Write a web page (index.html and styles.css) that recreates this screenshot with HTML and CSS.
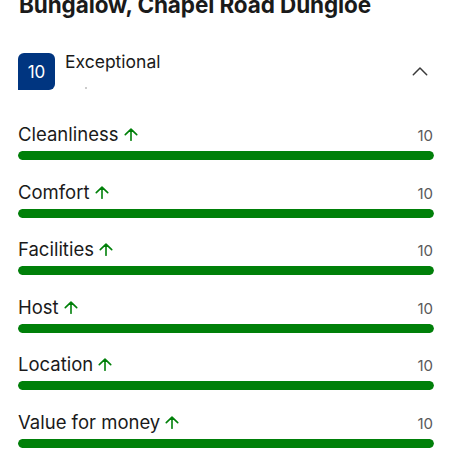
FILE: index.html
```html
<!DOCTYPE html>
<html>
<head>
<meta charset="utf-8">
<link rel="stylesheet" href="styles.css">
</head>
<body>
<div class="page">
  <h1 class="title">Bungalow, Chapel Road Dungloe</h1>
  <div class="summary">
    <div class="badge">10</div>
    <div class="summary-text">
      <div class="verdict">Exceptional</div>
      <div class="dot"></div>
    </div>
    <svg class="chevron" width="16" height="10" viewBox="0 0 16 10"><path d="M1.3 8.8 L8 2 L14.7 8.8" fill="none" stroke="#3a3a3a" stroke-width="1.5" stroke-linecap="round" stroke-linejoin="round"/></svg>
  </div>
  <div class="rows">
    <div class="row">
      <div class="row-head"><span class="label">Cleanliness<svg class="arrow" width="14" height="13" viewBox="0 0 14 13"><path d="M7 12.3V1.2 M1.3 6.7 L7 1.2 L12.7 6.7" fill="none" stroke="#008009" stroke-width="1.6" stroke-linecap="round" stroke-linejoin="round"/></svg></span><span class="score">10</span></div>
      <div class="bar"><div class="fill" style="width:100%"></div></div>
    </div>
    <div class="row">
      <div class="row-head"><span class="label">Comfort<svg class="arrow" width="14" height="13" viewBox="0 0 14 13"><path d="M7 12.3V1.2 M1.3 6.7 L7 1.2 L12.7 6.7" fill="none" stroke="#008009" stroke-width="1.6" stroke-linecap="round" stroke-linejoin="round"/></svg></span><span class="score">10</span></div>
      <div class="bar"><div class="fill" style="width:100%"></div></div>
    </div>
    <div class="row">
      <div class="row-head"><span class="label">Facilities<svg class="arrow" width="14" height="13" viewBox="0 0 14 13"><path d="M7 12.3V1.2 M1.3 6.7 L7 1.2 L12.7 6.7" fill="none" stroke="#008009" stroke-width="1.6" stroke-linecap="round" stroke-linejoin="round"/></svg></span><span class="score">10</span></div>
      <div class="bar"><div class="fill" style="width:100%"></div></div>
    </div>
    <div class="row">
      <div class="row-head"><span class="label">Host<svg class="arrow" width="14" height="13" viewBox="0 0 14 13"><path d="M7 12.3V1.2 M1.3 6.7 L7 1.2 L12.7 6.7" fill="none" stroke="#008009" stroke-width="1.6" stroke-linecap="round" stroke-linejoin="round"/></svg></span><span class="score">10</span></div>
      <div class="bar"><div class="fill" style="width:100%"></div></div>
    </div>
    <div class="row">
      <div class="row-head"><span class="label">Location<svg class="arrow" width="14" height="13" viewBox="0 0 14 13"><path d="M7 12.3V1.2 M1.3 6.7 L7 1.2 L12.7 6.7" fill="none" stroke="#008009" stroke-width="1.6" stroke-linecap="round" stroke-linejoin="round"/></svg></span><span class="score">10</span></div>
      <div class="bar"><div class="fill" style="width:100%"></div></div>
    </div>
    <div class="row">
      <div class="row-head"><span class="label">Value for money<svg class="arrow" width="14" height="13" viewBox="0 0 14 13"><path d="M7 12.3V1.2 M1.3 6.7 L7 1.2 L12.7 6.7" fill="none" stroke="#008009" stroke-width="1.6" stroke-linecap="round" stroke-linejoin="round"/></svg></span><span class="score">10</span></div>
      <div class="bar"><div class="fill" style="width:100%"></div></div>
    </div>
  </div>
</div>
</body>
</html>
```
FILE: styles.css
```css
* { box-sizing: border-box; }
html, body { margin: 0; padding: 0; background: #fff; }
body {
  font-family: Inter, "Liberation Sans", sans-serif;
  color: #1a1a1a;
}
.page {
  width: 450px;
  padding: 0 16px 0 18px;
}
.title {
  margin: -9px 0 0 1px;
  font-size: 22.5px;
  line-height: 28px;
  font-weight: 700;
  color: #1a1a1a;
  letter-spacing: -0.1px;
  white-space: nowrap;
}
.summary {
  display: flex;
  align-items: flex-start;
  margin-top: 34px;
  height: 37px;
}
.badge {
  flex: none;
  width: 37px;
  height: 37px;
  background: #003580;
  color: #fff;
  border-radius: 6px 6px 6px 0;
  display: flex;
  align-items: center;
  justify-content: center;
  font-size: 17px;
  padding-top: 1px;
}
.summary-text {
  margin-left: 10px;
  flex: 1;
}
.verdict {
  font-size: 17.5px;
  line-height: 18px;
  color: #1a1a1a;
}
.dot {
  width: 2px;
  height: 2px;
  background: #bbb;
  border-radius: 1px;
  margin: 16px 0 0 20px;
}
.chevron {
  flex: none;
  margin-top: 13px;
  margin-right: 6px;
}
.rows {
  margin-top: 33px;
  display: flex;
  flex-direction: column;
  gap: 20.5px;
}
.row {
  display: flex;
  flex-direction: column;
  flex: none;
}
.row-head {
  display: flex;
  justify-content: space-between;
  align-items: baseline;
  height: 22px;
  flex: none;
}
.label {
  font-size: 18.5px;
  line-height: 22px;
  color: #1a1a1a;
  display: inline-flex;
  align-items: center;
}
.arrow {
  margin-left: 5px;
  margin-top: 1px;
}
.score {
  font-size: 15px;
  line-height: 22px;
  color: #595959;
  margin-right: 1px;
}
.bar {
  flex: none;
  margin-top: 6px;
  height: 9px;
  border-radius: 5px;
  background: #e6e6e6;
  overflow: hidden;
}
.fill {
  height: 100%;
  background: #008009;
  border-radius: 5px;
}
```
